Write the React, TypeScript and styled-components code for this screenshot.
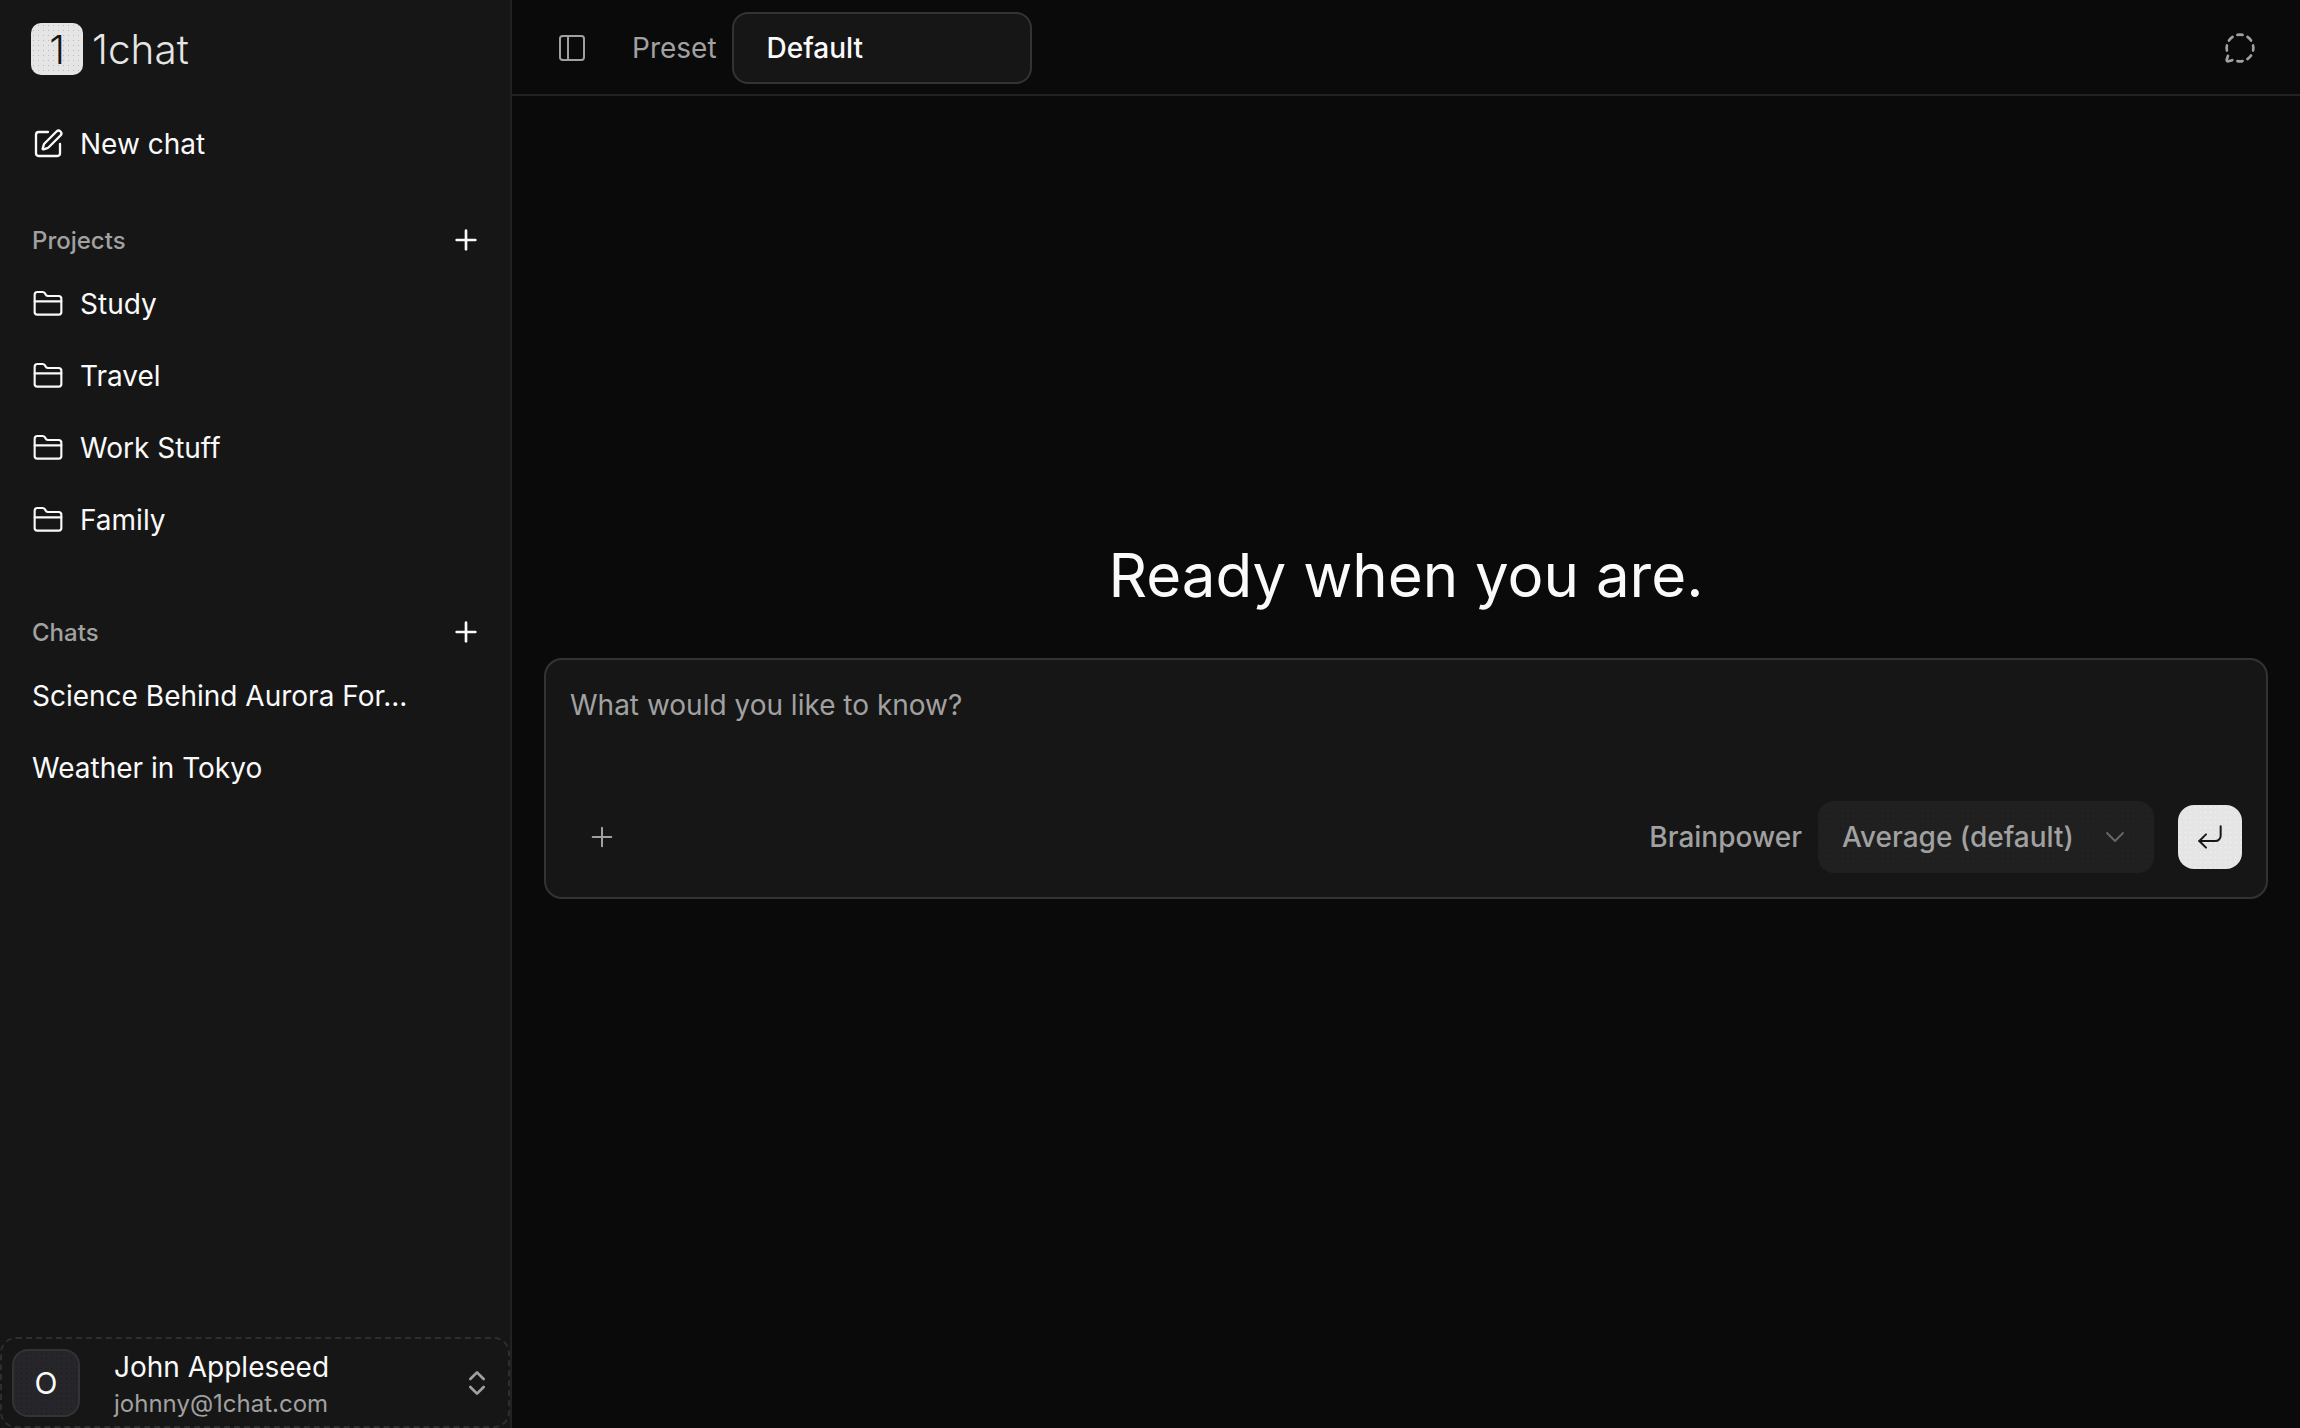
import * as React from "react";
import styled, { createGlobalStyle } from "styled-components";
import {
  ChevronDown,
  ChevronsUpDown,
  CornerDownLeft,
  FolderClosed,
  MessageCircleDashed,
  PanelLeft,
  Plus,
  SquarePen,
} from "lucide-react";

const projects = ["Study", "Travel", "Work Stuff", "Family"];
const chats = ["Science Behind Aurora For...", "Weather in Tokyo"];

const dots = (color: string) => `radial-gradient(${color} 0.6px, transparent 0.8px) 0 0 / 5px 5px`;

const GlobalStyle = createGlobalStyle`
  html, body {
    margin: 0;
    height: 100%;
    background: #0a0a0a;
  }
  #root {
    height: 100%;
  }
  * {
    box-sizing: border-box;
  }
`;

const App = () => {
  return (
    <Shell>
      <GlobalStyle />
      <Sidebar>
        <Brand>
          <LogoMark>1</LogoMark>
          <LogoText>1chat</LogoText>
        </Brand>

        <NewChat>
          <SquarePen size={32} strokeWidth={1.75} />
          New chat
        </NewChat>

        <SectionHead $gap={32}>
          <SectionLabel>Projects</SectionLabel>
          <Plus size={32} />
        </SectionHead>
        <List>
          {projects.map(name => (
            <Row key={name}>
              <FolderClosed size={32} strokeWidth={1.6} />
              {name}
            </Row>
          ))}
        </List>

        <SectionHead $gap={48}>
          <SectionLabel>Chats</SectionLabel>
          <Plus size={32} />
        </SectionHead>
        <List>
          {chats.map(name => (
            <Row key={name}>{name}</Row>
          ))}
        </List>

        <Account>
          <Avatar>O</Avatar>
          <AccountText>
            <AccountName>John Appleseed</AccountName>
            <AccountMail>johnny@1chat.com</AccountMail>
          </AccountText>
          <ChevronsUpDown size={32} color="#a1a1a1" />
        </Account>
      </Sidebar>

      <Main>
        <Header>
          <HeaderIcon><PanelLeft size={32} strokeWidth={1.5} /></HeaderIcon>
          <PresetLabel>Preset</PresetLabel>
          <PresetInput>Default</PresetInput>
          <HeaderEnd><MessageCircleDashed size={32} color="#a1a1a1" /></HeaderEnd>
        </Header>

        <Content>
          <Heading>Ready when you are.</Heading>
          <Composer>
            <Prompt placeholder="What would you like to know?" rows={1} />
            <ComposerBar>
              <AttachButton><Plus size={32} strokeWidth={1.5} /></AttachButton>
              <BrainLabel>Brainpower</BrainLabel>
              <BrainSelect>
                Average (default)
                <ChevronDown size={32} color="#666666" strokeWidth={1.5} />
              </BrainSelect>
              <Submit><CornerDownLeft size={32} strokeWidth={1.5} /></Submit>
            </ComposerBar>
          </Composer>
        </Content>
      </Main>
    </Shell>
  );
};

const Shell = styled.div`
  display: flex;
  height: 1428px;
  overflow: hidden;
  font-family: Inter, "Liberation Sans", sans-serif;
  font-size: 28px;
  color: #fafafa;
  background: #0a0a0a;
`;

const Sidebar = styled.aside`
  display: flex;
  flex-direction: column;
  flex: 0 0 512px;
  background: #161616;
  border-right: 2px solid #222222;
`;

const Brand = styled.div`
  display: flex;
  align-items: center;
  gap: 9px;
  height: 96px;
  padding: 2px 0 0 31px;
`;

const LogoMark = styled.div`
  display: flex;
  align-items: center;
  justify-content: center;
  width: 52px;
  height: 52px;
  border-radius: 10px;
  background: ${dots("#b8b8b8")}, #e5e5e5;
  color: #171717;
  font-size: 40px;
  font-weight: 300;
`;

const LogoText = styled.div`
  font-size: 40.5px;
  font-weight: 300;
  color: #e5e5e5;
`;

const NewChat = styled.div`
  display: flex;
  align-items: center;
  gap: 16px;
  height: 72px;
  margin-top: 12px;
  padding-left: 32px;
  color: #fafafa;
`;

const SectionHead = styled.div<{ $gap: number }>`
  display: flex;
  align-items: center;
  justify-content: space-between;
  height: 56px;
  margin-top: ${props => props.$gap}px;
  padding: 0 28px 0 32px;
`;

const SectionLabel = styled.div`
  font-size: 24px;
  font-weight: 500;
  color: #a1a1a1;
`;

const List = styled.div`
  display: flex;
  flex-direction: column;
`;

const Row = styled.div`
  display: flex;
  align-items: center;
  gap: 16px;
  height: 72px;
  padding: 0 32px;
  white-space: nowrap;
`;

const Account = styled.div`
  display: flex;
  align-items: center;
  height: 91px;
  margin-top: auto;
  padding: 0 15px 0 10px;
  border: 2px dashed #2e2e2e;
  border-radius: 16px;
`;

const Avatar = styled.div`
  display: flex;
  align-items: center;
  justify-content: center;
  width: 68px;
  height: 68px;
  margin-right: 34px;
  border: 2px solid #333333;
  border-radius: 16px;
  background: ${dots("#1b1b1f")}, #26262a;
  font-size: 30px;
`;

const AccountText = styled.div`
  display: flex;
  flex-direction: column;
  flex: 1;
  padding-top: 3px;
`;

const AccountName = styled.div`
  line-height: 38px;
`;

const AccountMail = styled.div`
  font-size: 24px;
  line-height: 34px;
  margin-top: 1px;
  color: #a1a1a1;
`;

const Main = styled.main`
  display: flex;
  flex-direction: column;
  flex: 1;
  min-width: 0;
`;

const Header = styled.header`
  display: flex;
  align-items: center;
  height: 96px;
  padding: 2px 44px 0 44px;
  border-bottom: 2px solid #222222;
`;

const HeaderIcon = styled.div`
  display: flex;
  color: #a1a1a1;
`;

const PresetLabel = styled.div`
  margin-left: 44px;
  color: #a1a1a1;
`;

const PresetInput = styled.div`
  display: flex;
  align-items: center;
  width: 300px;
  height: 72px;
  margin-left: 15px;
  padding-left: 33px;
  border: 2px solid #333333;
  border-radius: 16px;
  background: #161616;
  font-weight: 500;
`;

const HeaderEnd = styled.div`
  display: flex;
  margin-left: auto;
`;

const Content = styled.div`
  display: flex;
  flex-direction: column;
  align-items: center;
  padding: 439px 32px 0;
`;

const Heading = styled.h1`
  margin: 0 0 43px;
  font-size: 60px;
  line-height: 80px;
  font-weight: 400;
  color: #fafafa;
`;

const Composer = styled.div`
  display: flex;
  flex-direction: column;
  align-self: stretch;
  height: 241px;
  border: 2px solid #333333;
  border-radius: 18px;
  background: #161616;
`;

const Prompt = styled.textarea`
  flex: 1;
  padding: 28px 24px 0;
  border: none;
  outline: none;
  resize: none;
  background: transparent;
  font: inherit;
  color: #fafafa;
  &::placeholder {
    color: #a1a1a1;
    opacity: 1;
  }
`;

const ComposerBar = styled.div`
  display: flex;
  align-items: center;
  padding: 0 24px 24px 40px;
`;

const AttachButton = styled.div`
  display: flex;
  margin-right: auto;
  color: #a1a1a1;
`;

const BrainLabel = styled.div`
  font-weight: 500;
  color: #a1a1a1;
`;

const BrainSelect = styled.div`
  display: flex;
  align-items: center;
  justify-content: space-between;
  width: 336px;
  height: 72px;
  margin-left: 16px;
  padding: 0 23px 0 24px;
  border-radius: 16px;
  background: ${dots("#1a1a1a")}, #202020;
  font-weight: 500;
  color: #a1a1a1;
`;

const Submit = styled.div`
  display: flex;
  align-items: center;
  justify-content: center;
  width: 64px;
  height: 64px;
  margin-left: 24px;
  border-radius: 16px;
  background: ${dots("#f5f5f5")}, #e5e5e5;
  color: #171717;
`;

export default App;
